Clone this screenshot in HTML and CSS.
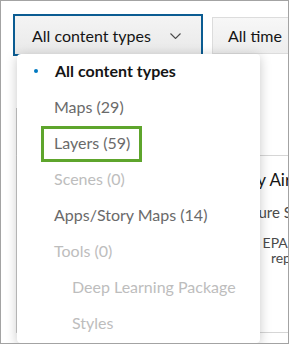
FILE: index.html
```html
<!DOCTYPE html>
<html>
<head>
<meta charset="utf-8">
<link rel="stylesheet" href="styles.css">
</head>
<body>
<div class="frame">
  <div class="toolbar">
    <div class="btn btn-focus">
      <span class="btn-label">All content types</span>
      <svg class="chev" width="11" height="6" viewBox="0 0 11 6"><path d="M0.5 0.5 L5.5 5.5 L10.5 0.5" fill="none" stroke="#4a4a4a" stroke-width="1.1"/></svg>
    </div>
    <div class="btn btn-plain"><span class="btn-label">All time</span></div>
  </div>

  <div class="results">
    <div class="card card-top"></div>
    <div class="card card-main">
      <div class="thumb"></div>
      <div class="info">
        <div class="title">Daily Air Quality Index</div>
        <div class="type">Feature Service by EPA</div>
        <div class="desc">
          <div class="line">Daily EPA forecasts of the air</div>
          <div class="line line2">Data reports from state agencies</div>
        </div>
      </div>
    </div>
  </div>

  <div class="menu">
    <div class="item selected"><span class="dot"></span>All content types</div>
    <div class="item">Maps (29)</div>
    <div class="item hl-item"><span class="hl">Layers (59)</span></div>
    <div class="item disabled">Scenes (0)</div>
    <div class="item">Apps/Story Maps (14)</div>
    <div class="item disabled">Tools (0)</div>
    <div class="item disabled sub">Deep Learning Package</div>
    <div class="item disabled sub">Styles</div>
  </div>
</div>
</body>
</html>
```

FILE: styles.css
```css
* { box-sizing: border-box; }
html, body { margin: 0; padding: 0; background: #fff; }
body { font-family: "Lato", "Noto Sans", sans-serif; }

.frame {
  position: relative;
  width: 289px;
  height: 344px;
  border: 1px solid #a3a3a3;
  overflow: hidden;
  background: #fff;
}

.toolbar {
  display: flex;
  align-items: flex-start;
  gap: 9px;
  padding: 13px 0 0 12px;
  white-space: nowrap;
}

.btn {
  display: flex;
  align-items: center;
  flex-shrink: 0;
  font-size: 16px;
  color: #151515;
}
.btn-focus {
  width: 190px;
  height: 42px;
  border: 2px solid #0b5c92;
  padding: 0 0 0 17px;
  background: linear-gradient(#f4f4f4, #e9e9e9);
}
.chev { margin-left: 19px; margin-top: 1px; }
.btn-plain {
  margin-top: 3px;
  height: 37px;
  width: 120px;
  border: 1px solid #dcdcdc;
  padding-left: 15px;
  background: linear-gradient(#f7f7f7, #ededed);
}

.results {
  margin: 52px 0 0 15px;
}
.card { border-left: 1px solid #c9c9c9; }
.card-top { height: 47px; }
.card-main {
  height: 178px;
  border-top: 1px solid #d6d6d6;
  border-bottom: 1px solid #d6d6d6;
  display: flex;
  white-space: nowrap;
}
.thumb { width: 211px; flex-shrink: 0; }
.info { padding-top: 12px; color: #151515; }
.title { font-size: 17px; line-height: 24px; }
.type { font-size: 15px; line-height: 20px; margin-top: 10px; color: #4a4a4a; padding-left: 2px; }
.desc { font-size: 14px; line-height: 15px; margin-top: 13px; color: #4a4a4a; }
.line { white-space: nowrap; }
.line2 { padding-left: 1px; word-spacing: 9px; }

.menu {
  position: absolute;
  left: 16px;
  top: 53px;
  width: 243px;
  height: 289px;
  background: #fff;
  border-radius: 4px;
  box-shadow: 0 2px 12px rgba(0, 0, 0, 0.22);
}
.item {
  position: relative;
  height: 36px;
  display: flex;
  align-items: center;
  padding: 0 0 4px 37px;
  font-size: 16px;
  color: #6a6a6a;
  white-space: nowrap;
}
.item.selected { color: #151515; font-weight: 700; padding-left: 38px; }
.item.disabled { color: #bdbdbd; }
.item.sub { padding-left: 55px; }
.item.hl-item { padding-bottom: 0; }
.dot {
  position: absolute;
  left: 17px;
  top: 15px;
  width: 4px;
  height: 4px;
  border-radius: 50%;
  background: #0079c1;
}
.hl {
  display: flex;
  align-items: center;
  height: 36px;
  margin-left: -13px;
  padding: 0 9px 3px 10px;
  border: 3px solid #5ea52c;
}
```
